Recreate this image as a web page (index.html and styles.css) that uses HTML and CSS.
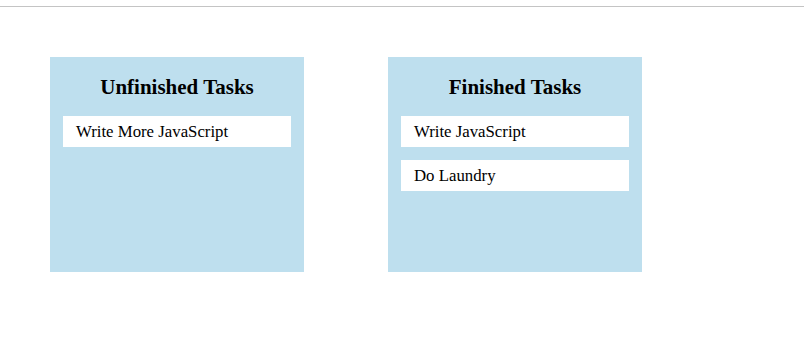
FILE: index.html
```html
<!DOCTYPE html>
<html>
<head>
<meta charset="utf-8">
<link rel="stylesheet" href="styles.css">
</head>
<body>
<div class="topbar"></div>
<main class="board">
  <section class="column">
    <h2 class="column-title">Unfinished Tasks</h2>
    <ul class="task-list">
      <li class="task">Write More JavaScript</li>
    </ul>
  </section>
  <section class="column">
    <h2 class="column-title">Finished Tasks</h2>
    <ul class="task-list">
      <li class="task">Write JavaScript</li>
      <li class="task">Do Laundry</li>
    </ul>
  </section>
</main>
</body>
</html>
```
FILE: styles.css
```css
html, body {
  margin: 0;
  padding: 0;
  background: #fff;
}
body {
  font-family: "Liberation Serif", "Times New Roman", serif;
  color: #000;
}
.topbar {
  height: 6px;
  border-bottom: 1px solid #c4c4c4;
}
.board {
  display: flex;
  gap: 84px;
  padding: 50px 0 0 50px;
}
.column {
  width: 254px;
  height: 215px;
  box-sizing: border-box;
  background: #bedfee;
  padding: 0 13px;
}
.column-title {
  margin: 18px 0 17px;
  font-size: 21px;
  line-height: 24px;
  font-weight: bold;
  text-align: center;
}
.task-list {
  list-style: none;
  margin: 0;
  padding: 0;
  display: flex;
  flex-direction: column;
  gap: 13px;
}
.task {
  background: #fff;
  font-size: 16.8px;
  line-height: 19px;
  padding: 6px 13px;
}
```
